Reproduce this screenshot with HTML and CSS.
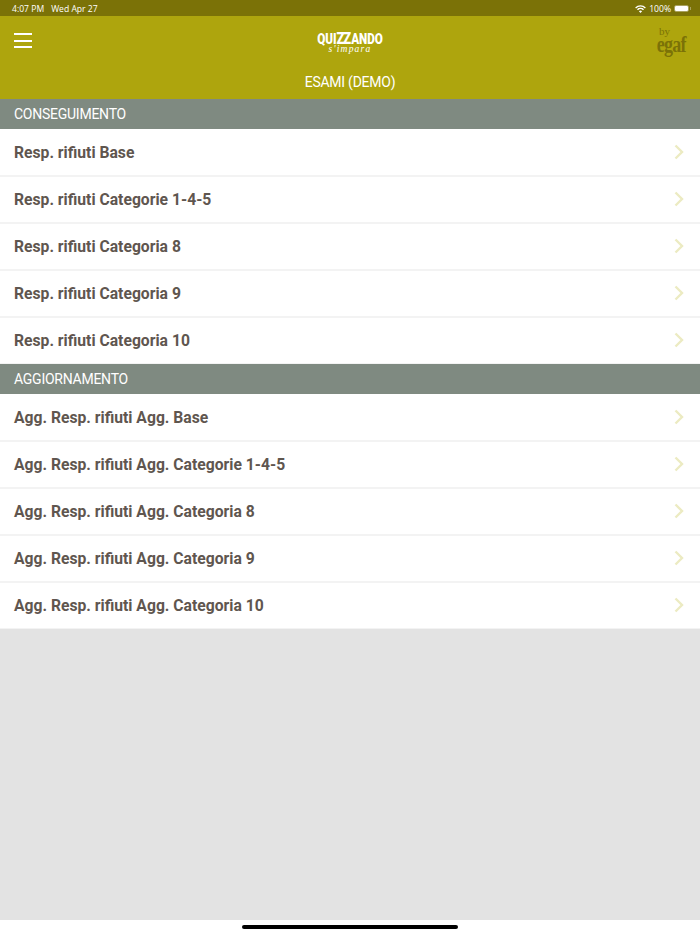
FILE: index.html
```html
<!DOCTYPE html>
<html lang="it">
<head>
    <meta charset="UTF-8">
    <meta name="viewport" content="width=device-width, initial-scale=1.0">
    <title>Quizzando - Esami (demo)</title>
    <link rel="stylesheet" href="styles.css">
</head>
<body>
    <div class="status-bar">
        <div class="status-time"><span>4:07 PM</span><span>Wed Apr 27</span></div>
        <div class="status-right">
            <svg class="wifi" width="11" height="8" viewBox="0 0 12 9"><path d="M6 9 4.200 7a2.500 2.500 0 0 1 3.600 0zM3.200 6 2 4.800a5.600 5.600 0 0 1 8 0L8.800 6a4 4 0 0 0-5.600 0zM1 3.800 0 2.700a8.400 8.400 0 0 1 12 0L11 3.800a7 7 0 0 0-10 0z" fill="#fff"/></svg>
            <span>100%</span>
            <span class="battery"><span class="battery-fill"></span></span>
        </div>
    </div>
    <header class="app-header">
        <div class="header-top">
            <div class="menu-icon"><span></span><span></span><span></span></div>
            <div class="logo">
                <div class="logo-main">QUI<span class="logo-zz">ZZ</span>ANDO</div>
                <div class="logo-sub">s'impara</div>
            </div>
            <div class="egaf">
                <div class="egaf-by">by</div>
                <div class="egaf-name">egaf</div>
            </div>
        </div>
        <div class="header-title">ESAMI (DEMO)</div>
    </header>
    <main class="content">
        <div class="section-head">CONSEGUIMENTO</div>
        <ul class="exam-list">
            <li>Resp. rifiuti Base<svg class="chevron" width="10" height="16" viewBox="0 0 10 16"><path d="M1.500 1.500 8 8l-6.500 6.500"/></svg></li>
            <li>Resp. rifiuti Categorie 1-4-5<svg class="chevron" width="10" height="16" viewBox="0 0 10 16"><path d="M1.500 1.500 8 8l-6.500 6.500"/></svg></li>
            <li>Resp. rifiuti Categoria 8<svg class="chevron" width="10" height="16" viewBox="0 0 10 16"><path d="M1.500 1.500 8 8l-6.500 6.500"/></svg></li>
            <li>Resp. rifiuti Categoria 9<svg class="chevron" width="10" height="16" viewBox="0 0 10 16"><path d="M1.500 1.500 8 8l-6.500 6.500"/></svg></li>
            <li>Resp. rifiuti Categoria 10<svg class="chevron" width="10" height="16" viewBox="0 0 10 16"><path d="M1.500 1.500 8 8l-6.500 6.500"/></svg></li>
        </ul>
        <div class="section-head">AGGIORNAMENTO</div>
        <ul class="exam-list">
            <li>Agg. Resp. rifiuti Agg. Base<svg class="chevron" width="10" height="16" viewBox="0 0 10 16"><path d="M1.500 1.500 8 8l-6.500 6.500"/></svg></li>
            <li>Agg. Resp. rifiuti Agg. Categorie 1-4-5<svg class="chevron" width="10" height="16" viewBox="0 0 10 16"><path d="M1.500 1.500 8 8l-6.500 6.500"/></svg></li>
            <li>Agg. Resp. rifiuti Agg. Categoria 8<svg class="chevron" width="10" height="16" viewBox="0 0 10 16"><path d="M1.500 1.500 8 8l-6.500 6.500"/></svg></li>
            <li>Agg. Resp. rifiuti Agg. Categoria 9<svg class="chevron" width="10" height="16" viewBox="0 0 10 16"><path d="M1.500 1.500 8 8l-6.500 6.500"/></svg></li>
            <li>Agg. Resp. rifiuti Agg. Categoria 10<svg class="chevron" width="10" height="16" viewBox="0 0 10 16"><path d="M1.500 1.500 8 8l-6.500 6.500"/></svg></li>
        </ul>
    </main>
    <div class="home-area"><div class="home-bar"></div></div>
</body>
</html>
```

FILE: styles.css
```css
html, body {
    height: 100%;
}
body {
    font-family: Roboto, Arial, sans-serif;
    margin: 0;
    background-color: #e3e3e3;
    display: flex;
    flex-direction: column;
    height: 934px;
    overflow: hidden;
}
.status-bar {
    height: 16px;
    box-sizing: border-box;
    background-color: #7b7207;
    color: #fff;
    font-family: "Open Sans", Arial, sans-serif;
    font-size: 8.6px;
    display: flex;
    justify-content: space-between;
    align-items: center;
    padding: 1px 11px 0 12px;
}
.status-time {
    display: flex;
    gap: 7px;
}
.status-right {
    display: flex;
    align-items: center;
    gap: 3px;
}
.battery {
    position: relative;
    width: 15px;
    height: 7px;
    padding: 1px;
    box-sizing: border-box;
    border: 1px solid #a8a15e;
    border-radius: 2px;
    display: flex;
}
.battery::after {
    content: "";
    position: absolute;
    right: -3px;
    top: 1px;
    width: 1px;
    height: 3px;
    background: #a8a15e;
}
.battery-fill {
    flex: 1;
    margin: -1px;
    background: #fff;
    border-radius: 1px;
}
.app-header {
    height: 83px;
    background-color: #aea50d;
    color: #fff;
    display: flex;
    flex-direction: column;
}
.header-top {
    height: 49px;
    padding: 0 14px;
    display: grid;
    grid-template-columns: 1fr auto 1fr;
    align-items: start;
}
.menu-icon {
    width: 18px;
    margin-top: 17px;
    display: flex;
    flex-direction: column;
    gap: 4.5px;
}
.menu-icon span {
    height: 2px;
    background: #fff;
}
.logo {
    margin-top: 16px;
    text-align: center;
    width: 66px;
}
.logo-main {
    font-weight: 900;
    font-size: 15px;
    line-height: 12px;
    letter-spacing: -0.1px;
    white-space: nowrap;
    display: flex;
    justify-content: center;
    align-items: baseline;
    transform: scaleX(0.78);
}
.logo-zz {
    font-size: 17px;
    letter-spacing: -2px;
    margin-right: 2px;
    line-height: 12px;
}
.logo-sub {
    font-family: "Liberation Serif", serif;
    font-style: italic;
    font-size: 9.5px;
    line-height: 9px;
    letter-spacing: 1.2px;
}
.egaf {
    justify-self: end;
    color: #7b7207;
    font-family: "Liberation Serif", serif;
    margin-top: 11px;
}
.egaf-by {
    font-size: 11px;
    line-height: 9px;
    text-align: right;
    padding-right: 16px;
}
.egaf-name {
    font-size: 24px;
    line-height: 16px;
    font-weight: bold;
    letter-spacing: -1px;
    transform: scaleX(0.75);
    transform-origin: right center;
}
.header-title {
    text-align: center;
    font-size: 14px;
    letter-spacing: -0.25px;
    line-height: 34px;
}
.section-head {
    height: 30px;
    line-height: 30px;
    padding-left: 14px;
    background-color: #7f8a81;
    color: #fff;
    font-size: 14px;
    letter-spacing: -0.25px;
}
.exam-list {
    list-style: none;
    margin: 0;
    padding: 0;
}
.exam-list li {
    height: 47px;
    box-sizing: border-box;
    padding: 0 16px 0 14px;
    background: #fff;
    border-top: 1px solid #f3f3f3;
    border-bottom: 1px solid #f3f3f3;
    color: #5f564f;
    font-size: 15.7px;
    font-weight: bold;
    display: flex;
    justify-content: space-between;
    align-items: center;
}
.exam-list li:first-child {
    border-top-color: #fff;
}
.chevron {
    fill: none;
    stroke: #ecebc2;
    stroke-width: 2.4;
    margin-top: -2px;
}
.content {
    flex: 1;
}
.home-area {
    height: 14px;
    background: #fff;
    display: flex;
    justify-content: center;
    padding-top: 5px;
    box-sizing: border-box;
}
.home-bar {
    width: 216px;
    height: 4px;
    border-radius: 2px;
    background: #000;
}
```
